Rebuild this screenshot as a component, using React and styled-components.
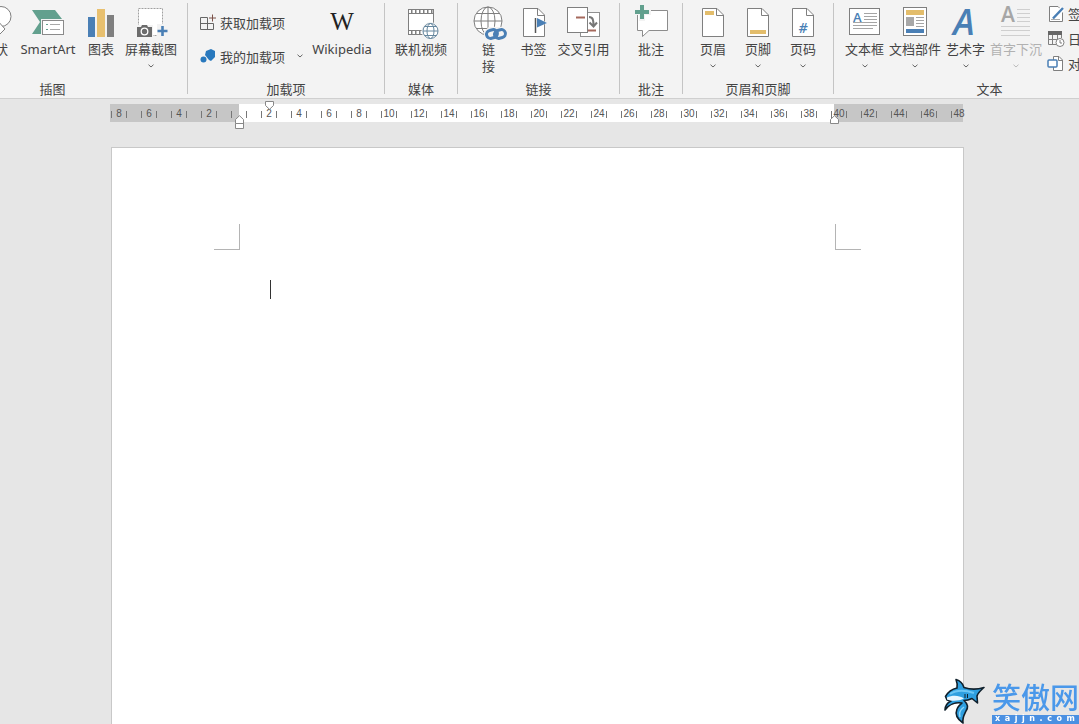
import React from 'react';
import styled, { createGlobalStyle } from 'styled-components';

const Global = createGlobalStyle`
  * { box-sizing: border-box; }
  body {
    margin: 0;
    background: #e6e6e6;
    color: #444;
    font-family: 'Noto Sans', 'Noto Sans CJK SC', sans-serif;
    font-size: 13px;
    overflow: hidden;
  }
  svg { display: block; overflow: visible; }
`;

const Screen = styled.div`
  display: flex;
  flex-direction: column;
  height: 100vh;
  overflow: hidden;
`;

/* ---------- ribbon ---------- */

const Ribbon = styled.header`
  flex: none;
  overflow: hidden;
  background: #f3f3f3;
  border-bottom: 1px solid #cfcfcf;
`;

const Strip = styled.div`
  display: flex;
  height: 98px;
  margin-left: -82px;
`;

const GroupBox = styled.section`
  flex: none;
  display: flex;
  flex-direction: column;
  width: ${(p) => p.$width}px;
`;

const GroupBody = styled.div`
  flex: 1;
  display: flex;
  align-items: flex-start;
  justify-content: ${(p) => p.$align || 'center'};
  padding: 0 ${(p) => (p.$align === 'flex-end' ? 5 : 8)}px;
`;

const GroupLabel = styled.div`
  height: 17px;
  line-height: 16px;
  text-align: center;
`;

const Separator = styled.div`
  flex: none;
  width: 1px;
  margin: 3px 0 4px;
  background: #c4c4c4;
`;

const BigButton = styled.button`
  flex: none;
  display: flex;
  flex-direction: column;
  align-items: center;
  width: ${(p) => p.$width}px;
  padding: 5px 0 0;
  border: 0;
  background: none;
  color: ${(p) => (p.disabled ? '#b1b1b1' : '#444')};
  font: inherit;
  line-height: 17px;
`;

const IconSlot = styled.span`
  width: 36px;
  height: 34px;
  margin-bottom: 2px;
`;

const ButtonText = styled.span`
  white-space: pre;
`;

const ChevronSlot = styled.span`
  display: flex;
  align-items: center;
  height: 16px;
`;

const SmallColumn = styled.div`
  display: flex;
  flex-direction: column;
  padding: ${(p) => p.$pad};
`;

const SmallButton = styled.button`
  display: flex;
  align-items: center;
  gap: 4px;
  height: ${(p) => p.$height}px;
  padding: 0;
  border: 0;
  background: none;
  color: #444;
  font: inherit;
  white-space: nowrap;
`;

const SmallChevron = styled.span`
  margin-left: 8px;
`;

const WikiMark = styled.span`
  display: block;
  text-align: center;
  color: #222;
  font: 25px/34px 'Liberation Serif', serif;
`;

/* ---------- ruler and page ---------- */

const Workspace = styled.main`
  flex: 1;
  display: flex;
  flex-direction: column;
  align-items: center;
  min-height: 0;
  padding: 5px 4px 0 0;
`;

const Ruler = styled.div`
  position: relative;
  flex: none;
  display: flex;
  width: 853px;
  height: 18px;
  margin-right: 2px;
`;

const RulerPart = styled.div`
  flex: ${(p) => (p.$margin ? '0 0 129px' : '1')};
  background: ${(p) => (p.$margin ? '#c6c6c6' : '#fff')};
`;

const Scale = styled.div`
  position: absolute;
  top: 0;
  left: -6px;
  display: flex;
  height: 20px;
`;

const Cell = styled.div`
  flex: none;
  display: flex;
  align-items: center;
  justify-content: center;
  width: 30px;
  color: #555;
  font: 10px/18px 'Liberation Sans', sans-serif;
`;

const CellNumber = styled.span`
  display: flex;
  justify-content: center;
  width: 14px;
`;

const Tick = styled.i`
  flex: none;
  width: 1px;
  height: 7px;
  background: #777;
  visibility: ${(p) => (p.$hidden ? 'hidden' : 'visible')};
`;

const Marker = styled.span`
  position: absolute;
  top: ${(p) => p.$top}px;
  left: ${(p) => p.$left}px;
`;

const Page = styled.article`
  flex: 1;
  width: 853px;
  margin-top: 25px;
  padding: 76px 102px 0;
  border: 1px solid #c8c8c8;
  border-bottom: 0;
  background: #fff;
`;

const Corners = styled.div`
  display: flex;
  justify-content: space-between;
`;

const Corner = styled.span`
  width: 26px;
  height: 26px;
  border-bottom: 1px solid #b4b4b4;
  border-${(p) => p.$side}: 1px solid #b4b4b4;
`;

const TextArea = styled.div`
  padding: 30px 56px;
`;

const Caret = styled.span`
  display: block;
  width: 1px;
  height: 19px;
  background: #333;
`;

/* ---------- site mark ---------- */

const SiteMark = styled.aside`
  position: fixed;
  right: 0;
  bottom: 0;
  display: flex;
  align-items: flex-end;
  gap: 6px;
  width: 135px;
  overflow: hidden;
`;

const SiteText = styled.div`
  flex: none;
  width: 87px;
`;

const SiteName = styled.div`
  color: #4a98ea;
  font: 500 29px/38px 'Noto Sans CJK SC', sans-serif;
  white-space: nowrap;
`;

const SiteUrl = styled.div`
  display: flex;
  justify-content: space-between;
  height: 9px;
  padding: 0 4px 0 3px;
  background: #4a90e2;
  color: #fff;
  font: bold 8px/8px 'DejaVu Sans', sans-serif;
`;

/* ---------- drawings ---------- */

const BLUE = '#4a7fb5';
const GREEN = '#62a08e';
const YELLOW = '#e3bd6b';
const GREY = '#7f7f7f';

const Big = ({ children }) => (
  <svg width="36" height="34" viewBox="0 0 36 34" fill="none" aria-hidden="true">{children}</svg>
);
const Small = ({ children }) => (
  <svg width="16" height="16" viewBox="0 0 16 16" fill="none" aria-hidden="true">{children}</svg>
);
const Chevron = ({ color = '#666' }) => (
  <svg width="6" height="4" viewBox="0 0 6 4" fill="none" aria-hidden="true">
    <path d="M.5 .7L3 3L5.5 .7" stroke={color} />
  </svg>
);
const Sheet = ({ children }) => (
  <Big>
    <path d="M7.5 3.5H22L28.5 10V31.5H7.5Z" fill="#fff" stroke={GREY} />
    <path d="M21.5 3.5V10.5H28.5" stroke={GREY} />
    {children}
  </Big>
);

const icons = {
  shapes: (
    <Big>
      <circle cx="24" cy="11.5" r="10" fill="#fff" stroke={GREY} />
      <path d="M20 15L28 24L20 32L12 24Z" fill="#fff" stroke={GREY} />
    </Big>
  ),
  smartart: (
    <Big>
      <path d="M2 5H25L32 14H11V29H2L10 17Z" fill={GREEN} />
      <rect x="11" y="14" width="24" height="17" fill="#f3f3f3" />
      <rect x="12.5" y="15.5" width="21" height="14" fill="#fff" stroke="#8a8a8a" />
      <path d="M16 19.5h2M16 24.5h2" stroke={GREEN} />
      <path d="M20 19.5h10M20 24.5h10" stroke="#a8a8a8" />
    </Big>
  ),
  chart: (
    <Big>
      <rect x="5" y="12" width="7" height="20" fill={BLUE} />
      <rect x="14" y="4" width="8" height="28" fill="#e8c06f" />
      <rect x="24" y="10" width="7" height="22" fill={GREY} />
    </Big>
  ),
  screenshot: (
    <Big>
      <rect x="5.5" y="3.5" width="24" height="27" fill="#fff" stroke="#a0a0a0" strokeDasharray="2 1" />
      <path d="M3 20H20V33H3ZM24 19H36V32H24Z" fill="#f3f3f3" />
      <path d="M4 22H8L9 20H14L15 22H19V32H4Z" fill="#6c6c6c" />
      <circle cx="11.5" cy="26.5" r="3.3" stroke="#fff" strokeWidth="1.3" />
      <path d="M29.5 21V31M24.5 26H34.5" stroke={BLUE} strokeWidth="2.6" />
    </Big>
  ),
  video: (
    <Big>
      <rect x="5.5" y="4.5" width="25" height="25" fill="#fff" stroke={GREY} />
      <path d="M5.5 8.5H30.5M5.5 25.5H19" stroke={GREY} />
      <path d="M8 6.5H30M8 27.5H19" stroke={GREY} strokeWidth="3" strokeDasharray="1.500 2.500" />
      <circle cx="27.5" cy="26" r="9" fill="#f3f3f3" />
      <circle cx="27.5" cy="26" r="7.5" fill="#fff" stroke="#66879e" />
      <ellipse cx="27.5" cy="26" rx="3.5" ry="7.5" stroke="#66879e" />
      <path d="M20 26H35M21.5 21.5H33.5M21.5 30.5H33.5" stroke="#66879e" />
    </Big>
  ),
  link: (
    <Big>
      <circle cx="17" cy="16" r="14" fill="#fff" stroke={GREY} />
      <ellipse cx="17" cy="16" rx="7" ry="14" stroke={GREY} />
      <path d="M3 16H31M5.5 8.500H28.500M5.500 23.500H28.500M17 2V30" stroke={GREY} />
      <path d="M13 26L18 22H34L37 26V36H13Z" fill="#f3f3f3" />
      <g stroke={BLUE} strokeWidth="3">
        <rect x="15.5" y="25" width="11" height="8" rx="4" transform="rotate(-14 21 29)" />
        <rect x="23.5" y="25" width="11" height="8" rx="4" transform="rotate(-14 29 29)" />
      </g>
    </Big>
  ),
  bookmark: (
    <Sheet>
      <path d="M19 11L31 18L19 24Z" fill="#fff" />
      <path d="M19.5 13V28" stroke="#555" strokeWidth="1.5" />
      <path d="M21 13L31 18L21 22.5Z" fill={BLUE} />
    </Sheet>
  ),
  crossref: (
    <Big>
      <rect x="14.5" y="7.5" width="19" height="24" fill="#fff" stroke="#909090" />
      <rect x="1.5" y="2.5" width="20" height="25" fill="#fff" stroke={GREY} />
      <path d="M10 12.5H19M22 25.5H30" stroke="#a5695c" strokeWidth="2" />
      <path d="M23 12C27 12 27.5 15 27.5 21M23.5 17.5L27.5 21.5L31 17.5" stroke="#777" strokeWidth="2" />
    </Big>
  ),
  comment: (
    <Big>
      <path d="M4.5 5.5H34.5V25.5H16L9.5 31.5V25.5H4.5Z" fill="#fff" stroke="#8c8c8c" />
      <path d="M9 -1V16M1 7H18" stroke="#f3f3f3" strokeWidth="6" />
      <path d="M9 0V14M2 7H16" stroke={GREEN} strokeWidth="4" />
    </Big>
  ),
  header: <Sheet><rect x="10" y="6" width="9" height="4" fill={YELLOW} /></Sheet>,
  footer: <Sheet><rect x="10" y="25" width="16" height="4" fill={YELLOW} /></Sheet>,
  pageno: (
    <Sheet>
      <text x="18" y="28" textAnchor="middle" fill={BLUE} fontFamily="Open Sans, sans-serif" fontSize="14" fontWeight="600" fontStyle="italic">#</text>
    </Sheet>
  ),
  textbox: (
    <Big>
      <rect x="2.5" y="3.5" width="30" height="26" fill="#fff" stroke={GREY} />
      <text x="6" y="17" fill={BLUE} fontFamily="Open Sans, sans-serif" fontSize="13" fontWeight="600">A</text>
      <path d="M17 8.5H30M17 11.5H30M17 14.5H30M6 17.5H30M6 20.5H30M6 23.5H26" stroke="#a5a5a5" />
    </Big>
  ),
  parts: (
    <Big>
      <rect x="6.5" y="2.5" width="23" height="28" fill="#fff" stroke={GREY} />
      <rect x="9" y="5" width="18" height="5" fill={YELLOW} />
      <rect x="9" y="12" width="8" height="9" fill="#a8a8a8" />
      <path d="M19 12.5H27M19 15.5H27M19 18.5H27M19 21.5H27" stroke="#a5a5a5" />
      <rect x="9" y="24" width="18" height="4" fill={BLUE} />
    </Big>
  ),
  wordart: (
    <Big>
      <text x="16" y="30" textAnchor="middle" fill={BLUE} fontFamily="Open Sans, sans-serif" fontSize="36" fontStyle="italic" fontWeight="600">A</text>
    </Big>
  ),
  dropcap: (
    <Big>
      <text x="3" y="17" fill="#a6a6a6" fontFamily="Open Sans, sans-serif" fontSize="21" fontWeight="600">A</text>
      <path d="M19 4.5H32M19 8.5H32M19 12.5H32M19 16.5H32M3 21.5H32M3 25.5H32M3 30.5H32" stroke="#cfcfcf" />
    </Big>
  ),
  getAddins: (
    <Small>
      <path d="M7.5 3.5H.5V15.5H13.5V9.5H.5M7.5 3.5V15.5" stroke="#666" />
      <path d="M12.5 .5V7.5M9 4H16" stroke="#7b5148" />
    </Small>
  ),
  myAddins: (
    <Small>
      <path d="M6 3L11 1L15 3L15 9L11 13L9 12L5 7Z" fill="#2878bd" />
      <circle cx="3.5" cy="11.5" r="3" fill="#2878bd" />
    </Small>
  ),
  signature: (
    <Small>
      <path d="M1.5 .5H10L14.5 5V15.5H1.5Z" fill="#fff" stroke={GREY} />
      <path d="M3 13.5H12" stroke="#aaa" />
      <path d="M7 11L15 2" stroke="#fff" strokeWidth="5" />
      <path d="M5 12.5L15 2" stroke={BLUE} strokeWidth="2.5" />
    </Small>
  ),
  date: (
    <Small>
      <rect x="0" y="0" width="14" height="4" fill="#666" />
      <path d="M.5 4V13.5H8M13.5 4V7M0 8.5H9M4.500 4V13M9.500 4V8" stroke={GREY} />
      <circle cx="12" cy="11.5" r="4" fill="#fff" stroke={GREY} />
      <path d="M12 9V12H14" stroke={GREY} />
    </Small>
  ),
  object: (
    <Small>
      <path d="M5.5 .5H11L14.5 4V14.5H5.5Z" fill="#fff" stroke={GREY} />
      <path d="M10.5 .5V4.5H14.5" stroke={GREY} />
      <rect x="0" y="4" width="9" height="7" rx="1" fill="#fff" stroke={BLUE} strokeWidth="1.5" />
    </Small>
  ),
};

const Shark = () => (
  <svg width="42" height="46" viewBox="0 0 42 46" fill="none" aria-hidden="true">
    <path d="M1.500 18.500C4 14 8 11 13 10C13.500 7 13 4 12 1.500C17 3 19 6 20 9.500C26 11.500 32 12 40 9.500C37 12 34 15 33 18L33.500 25L28 20.500C25 22 23 22.500 20 22.500C24 26 24 30 22 33C20 37 18 40 19 45C13 41 11 36 13 31C14 28 16 27 18 25C12 24 5 26 1 32C1 28 3 25 7 23L3 22Z" fill="#2e9fe0" stroke="#10202c" strokeWidth="1.600" strokeLinejoin="round" />
    <path d="M3 19.500C8 17 15 17 20 20.500C15 23 8 23.500 3 21.500Z" fill="#e8f6ff" />
    <path d="M6 16C12 12 21 12 30 15" stroke="#6cc6f5" strokeWidth="2" />
    <path d="M20 29C16 32 15 36 16 39" stroke="#8fd6f8" strokeWidth="1.500" />
    <path d="M21 16V20M23.500 16V20" stroke="#10202c" />
  </svg>
);

/* ---------- parts ---------- */

const Tool = ({ icon, text, width, menu, disabled }) => (
  <BigButton type="button" $width={width} disabled={disabled}>
    <IconSlot>{icon}</IconSlot>
    <ButtonText>{text}</ButtonText>
    {menu && <ChevronSlot><Chevron color={disabled ? '#bbb' : '#666'} /></ChevronSlot>}
  </BigButton>
);

const Group = ({ label, width, align, children }) => (
  <>
    <GroupBox $width={width - 1} aria-label={label}>
      <GroupBody $align={align}>{children}</GroupBody>
      <GroupLabel>{label}</GroupLabel>
    </GroupBox>
    <Separator />
  </>
);

const scale = [8, 6, 4, 2, 0, ...Array.from({ length: 24 }, (_, i) => (i + 1) * 2)];

export default function App() {
  return (
    <Screen>
      <Global />
      <Ribbon>
        <Strip>
          <Group label="插图" width={270} align="flex-end">
            <Tool icon={icons.shapes} text="形状" width={38} menu />
            <Tool icon={icons.smartart} text="SmartArt" width={68} />
            <Tool icon={icons.chart} text="图表" width={38} />
            <Tool icon={icons.screenshot} text="屏幕截图" width={62} menu />
          </Group>
          <Group label="加载项" width={197} align="space-between">
            <SmallColumn $pad="5px 0 0 4px">
              <SmallButton type="button" $height={34}>{icons.getAddins}获取加载项</SmallButton>
              <SmallButton type="button" $height={34}>
                {icons.myAddins}我的加载项<SmallChevron><Chevron /></SmallChevron>
              </SmallButton>
            </SmallColumn>
            <Tool icon={<WikiMark>W</WikiMark>} text="Wikipedia" width={68} />
          </Group>
          <Group label="媒体" width={73}>
            <Tool icon={icons.video} text="联机视频" width={56} />
          </Group>
          <Group label="链接" width={162}>
            <Tool icon={icons.link} text={'链\n接'} width={46} />
            <Tool icon={icons.bookmark} text="书签" width={44} />
            <Tool icon={icons.crossref} text="交叉引用" width={56} />
          </Group>
          <Group label="批注" width={63}>
            <Tool icon={icons.comment} text="批注" width={44} />
          </Group>
          <Group label="页眉和页脚" width={151}>
            <Tool icon={icons.header} text="页眉" width={45} menu />
            <Tool icon={icons.footer} text="页脚" width={45} menu />
            <Tool icon={icons.pageno} text="页码" width={45} menu />
          </Group>
          <Group label="文本" width={312} align="flex-start">
            <Tool icon={icons.textbox} text="文本框" width={45} menu />
            <Tool icon={icons.parts} text="文档部件" width={56} menu />
            <Tool icon={icons.wordart} text="艺术字" width={45} menu />
            <Tool icon={icons.dropcap} text="首字下沉" width={56} menu disabled />
            <SmallColumn $pad="1px 0 0 4px">
              <SmallButton type="button" $height={25}>{icons.signature}签名行</SmallButton>
              <SmallButton type="button" $height={25}>{icons.date}日期和时间</SmallButton>
              <SmallButton type="button" $height={25}>{icons.object}对象</SmallButton>
            </SmallColumn>
          </Group>
        </Strip>
      </Ribbon>

      <Workspace>
        <Ruler>
          <RulerPart $margin />
          <RulerPart />
          <RulerPart $margin />
          <Scale>
            {scale.map((n, i) => (
              <Cell key={i}>
                <Tick />
                <CellNumber>{n || ''}</CellNumber>
                <Tick $hidden={n === 48} />
              </Cell>
            ))}
          </Scale>
          <Marker $left={125} $top={11}>
            <svg width="9" height="14" viewBox="0 0 9 14" fill="#fff" stroke="#888" aria-hidden="true">
              <path d="M.5 8.5V4.5L4.5 .7L8.5 4.5V13.5H.5ZM.5 8.5H8.5" />
            </svg>
          </Marker>
          <Marker $left={155} $top={-3}>
            <svg width="9" height="9" viewBox="0 0 9 9" fill="#fff" stroke="#888" aria-hidden="true">
              <path d="M.5 .5H8.5V4.5L4.5 8.3L.5 4.5Z" />
            </svg>
          </Marker>
          <Marker $left={720} $top={11}>
            <svg width="9" height="9" viewBox="0 0 9 9" fill="#fff" stroke="#888" aria-hidden="true">
              <path d="M.5 8.5V4.5L4.5 .7L8.5 4.5V8.5Z" />
            </svg>
          </Marker>
        </Ruler>
        <Page>
          <Corners>
            <Corner $side="right" />
            <Corner $side="left" />
          </Corners>
          <TextArea role="textbox" aria-label="正文"><Caret /></TextArea>
        </Page>
      </Workspace>

      <SiteMark>
        <Shark />
        <SiteText>
          <SiteName>笑傲网</SiteName>
          <SiteUrl>{[...'xajjn.com'].map((c, i) => <span key={i}>{c}</span>)}</SiteUrl>
        </SiteText>
      </SiteMark>
    </Screen>
  );
}
